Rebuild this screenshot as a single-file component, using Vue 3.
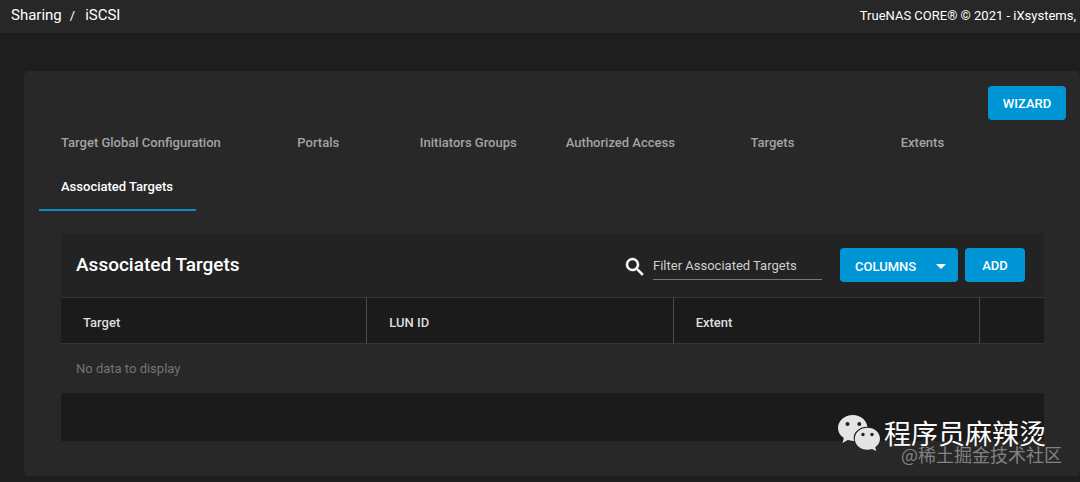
<script setup>
import { ref } from 'vue'

const tabs = [
  'Target Global Configuration',
  'Portals',
  'Initiators Groups',
  'Authorized Access',
  'Targets',
  'Extents',
  'Associated Targets',
]
const active = ref('Associated Targets')
const columns = ['Target', 'LUN ID', 'Extent']
const filter = ref('')
</script>

<template>
  <div class="page">
    <header class="topbar">
      <nav class="crumbs" aria-label="Breadcrumb">
        <a href="#sharing">Sharing</a>
        <span class="slash">/</span>
        <a href="#iscsi">iSCSI</a>
      </nav>
      <span class="copyright">TrueNAS CORE® © 2021 - iXsystems,</span>
    </header>

    <main class="card">
      <div class="actions">
        <button type="button" class="btn wizard">WIZARD</button>
      </div>

      <nav class="tabs" role="tablist">
        <button
          v-for="tab in tabs"
          :key="tab"
          type="button"
          role="tab"
          class="tab"
          :class="{ active: tab === active }"
          :aria-selected="tab === active"
          @click="active = tab"
        >{{ tab }}</button>
      </nav>

      <section class="panel">
        <div class="toolbar">
          <h2 class="title">Associated Targets</h2>
          <label class="search" for="filter" aria-label="Filter">
            <svg viewBox="0 0 24 24" width="24" height="24" aria-hidden="true">
              <path fill="#fff" stroke="#fff" stroke-width=".5" d="M15.5 14h-.79l-.28-.27A6.47 6.47 0 0 0 16 9.5 6.5 6.5 0 1 0 9.5 16c1.61 0 3.09-.59 4.23-1.57l.27.28v.79l5 4.99L20.490 19l-4.99-5zm-6 0C7.010 14 5 11.990 5 9.500S7.010 5 9.500 5 14 7.010 14 9.500 11.990 14 9.500 14z" />
            </svg>
          </label>
          <input id="filter" v-model="filter" class="filter" type="text" placeholder="Filter Associated Targets" />
          <button type="button" class="btn columns">
            COLUMNS
            <svg viewBox="0 0 10 5" width="10" height="5" aria-hidden="true">
              <path fill="#fff" d="M0 0h10L5 5z" />
            </svg>
          </button>
          <button type="button" class="btn add">ADD</button>
        </div>

        <table class="grid">
          <thead>
            <tr>
              <th v-for="c in columns" :key="c" scope="col">{{ c }}</th>
              <th class="menu" scope="col"></th>
            </tr>
          </thead>
          <tbody>
            <tr>
              <td colspan="4">No data to display</td>
            </tr>
          </tbody>
        </table>
        <div class="footer"></div>
      </section>
    </main>

    <div class="signature">
      <svg viewBox="0 0 42 36" width="42" height="36" aria-hidden="true">
        <path fill="#e4e4e4" d="M15 0C6.500 0 0 5.800 0 13c0 4.200 2.200 7.600 5.800 10L4.500 28l5.300-2.900c1.700.5 3.400.8 5.200.8h1.200C13.800 18 21 11.600 29.500 11.800 28.300 5 22.500 0 15 0z" />
        <path fill="#e4e4e4" d="M29.500 12.800c-7.100 0-12.700 4.900-12.700 11s5.600 11 12.700 11c1.600 0 3.100-.3 4.500-.7l4.300 2-1.100-3.900c2.900-2 4.800-5 4.800-8.400 0-6.100-5.400-11-12.500-11z" />
        <g fill="#202020">
          <circle cx="9.500" cy="9" r="2" />
          <circle cx="21.300" cy="9" r="2" />
          <circle cx="25" cy="19.500" r="1.700" />
          <circle cx="34" cy="19.500" r="1.700" />
        </g>
      </svg>
      <span>程序员麻辣烫</span>
    </div>
    <div class="community">@稀土掘金技术社区</div>
  </div>
</template>

<style>
body {
  margin: 0;
  background: #1e1e1e;
}
</style>

<style scoped>
.page {
  position: relative;
  min-height: 100vh;
  box-sizing: border-box;
  padding-bottom: 5px;
  overflow: hidden;
  background: #1e1e1e;
  color: #fff;
  font-family: Roboto, "Liberation Sans", sans-serif;
  font-size: 13px;
}
button,
input {
  font-family: inherit;
  margin: 0;
}
.topbar {
  display: flex;
  justify-content: space-between;
  align-items: center;
  height: 33px;
  padding: 0 4px 3px 11px;
  box-sizing: border-box;
  background: #272727;
}
.crumbs {
  display: flex;
  align-items: center;
  font-size: 15px;
}
.crumbs a {
  color: #fff;
  text-decoration: none;
}
.slash {
  margin: 0 10px 0 8px;
  font-size: 13px;
}
.copyright {
  font-size: 13px;
}
.card {
  margin: 38px 0 0 24px;
  padding: 15px 14px 35px 15px;
  background: #282828;
  border-radius: 5px;
}
.actions {
  display: flex;
  justify-content: flex-end;
}
.btn {
  height: 34px;
  padding: 0;
  border: 0;
  border-radius: 4px;
  background: #0095d5;
  color: #fff;
  font-size: 13px;
  font-weight: 500;
}
.wizard {
  width: 78px;
}
.tabs {
  display: flex;
  flex-wrap: wrap;
  padding-top: 1px;
}
.tab {
  min-width: 150px;
  padding: 0 23px 0 22px;
  border: 0;
  background: none;
  color: #a3a3a3;
  font-size: 13px;
  font-weight: 500;
  line-height: 44px;
}
.tab.active {
  color: #fff;
  border-bottom: 2px solid #0d8fc4;
}
.panel {
  margin: 22px 22px 0;
}
.toolbar {
  display: flex;
  align-items: center;
  height: 64px;
  padding: 0 19px 0 15px;
  box-sizing: border-box;
  background: #232323;
}
.title {
  flex: 1;
  margin: 0;
  font-size: 19px;
  line-height: 24px;
  font-weight: 500;
}
.search {
  display: flex;
  margin-right: 6px;
  padding-top: 4px;
}
.filter {
  width: 169px;
  height: 30px;
  padding: 2px 0 0;
  margin-right: 18px;
  box-sizing: border-box;
  border: 0;
  border-bottom: 1px solid #777;
  outline: 0;
  background: none;
  color: #fff;
  font-size: 13px;
}
.filter::placeholder {
  color: #cfcfcf;
  opacity: 1;
}
.columns {
  display: flex;
  align-items: center;
  justify-content: space-between;
  width: 118px;
  padding: 3px 12px 0 15px;
  margin-right: 7px;
}
.add {
  width: 60px;
}
.grid {
  width: 100%;
  table-layout: fixed;
  border-collapse: separate;
  border-spacing: 0;
}
.grid th {
  height: 47px;
  box-sizing: border-box;
  padding: 4px 0 0 22px;
  border-top: 1px solid #353535;
  border-bottom: 1px solid #353535;
  border-right: 1px solid #4a4a4a;
  background: #1b1b1b;
  color: #dedede;
  font-weight: 500;
  text-align: left;
}
.grid .menu {
  width: 64px;
  padding: 0;
  border-right: 0;
}
.grid td {
  height: 49px;
  box-sizing: border-box;
  padding: 0 15px;
  color: #747474;
}
.footer {
  height: 48px;
  background: #1b1b1b;
}
.signature {
  position: absolute;
  right: 34px;
  bottom: 31px;
  display: flex;
  align-items: center;
  gap: 4px;
  font-family: "Noto Sans CJK SC", sans-serif;
  font-size: 27px;
  line-height: 36px;
}
.community {
  position: absolute;
  right: 18px;
  bottom: 16px;
  color: #828282;
  font-family: "Noto Sans CJK SC", sans-serif;
  font-size: 18px;
  line-height: 24px;
}
</style>
